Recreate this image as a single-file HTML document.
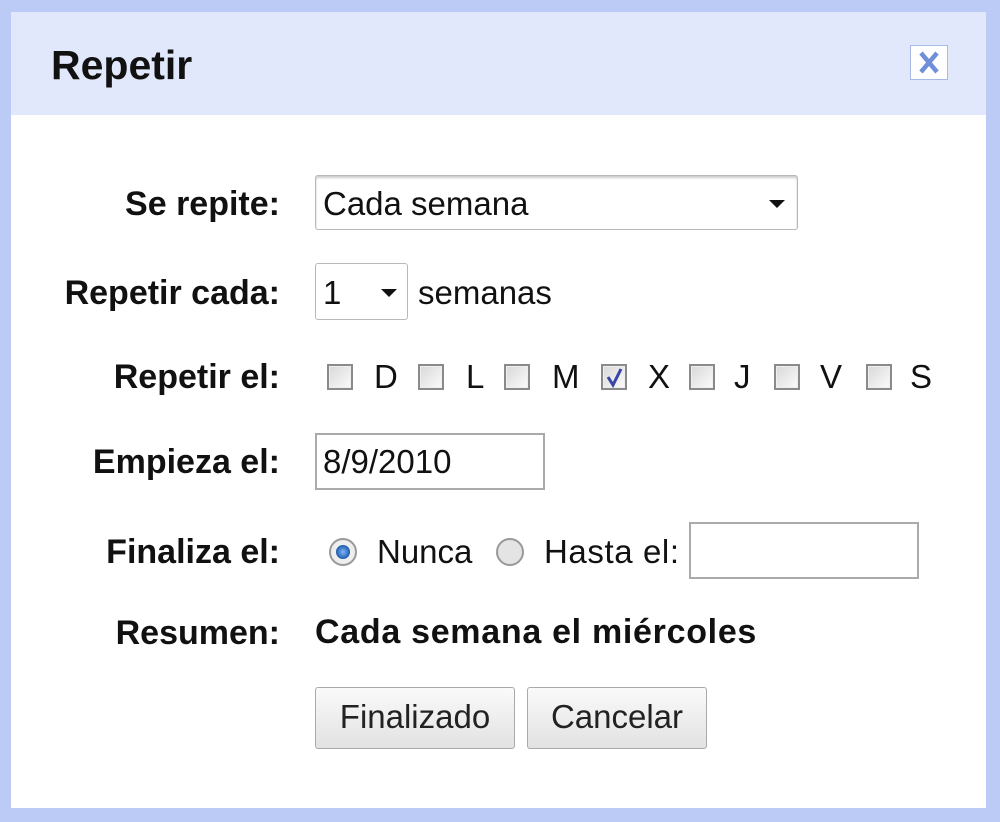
<!DOCTYPE html>
<html><head><meta charset="utf-8"><style>
*{margin:0;padding:0;box-sizing:border-box}
body{width:1000px;height:822px;background:#bccbf5;position:relative;overflow:hidden;font-family:"Liberation Sans",Arial,sans-serif;color:#111}
.dlg{position:absolute;left:11px;top:12px;width:975px;height:796px;background:#fff}
.hdr{position:absolute;left:11px;top:12px;width:975px;height:103px;background:#e1e8fc}
.t{position:absolute;white-space:nowrap;line-height:1}
.lb{font-weight:bold;font-size:34px;right:720px;text-align:right}
.rg{font-size:33px}
.box{position:absolute;background:#fff;border:1px solid #b8b8b8}
.cb{position:absolute;width:26px;height:26px;border:2px solid #8a8a8a;background:linear-gradient(135deg,#d8d8d8,#fbfbfb);box-shadow:inset 0 0 0 1px #eee}
.btn{position:absolute;border:1px solid #aaa;border-radius:3px;background:linear-gradient(#fafafa,#e2e2e2);font-size:33px;text-align:center;line-height:58px;color:#222}
.arr{position:absolute;width:0;height:0;border-left:8px solid transparent;border-right:8px solid transparent;border-top:8px solid #111}
</style></head><body>
<div class="dlg"></div>
<div class="hdr"></div>
<div class="t" style="left:51px;top:45px;font-size:41px;font-weight:bold">Repetir</div>
<div style="position:absolute;left:910px;top:45px;width:38px;height:35px;border:1px solid #a9b9e6;background:#fff"></div>
<svg style="position:absolute;left:910px;top:45px" width="38" height="35"><path d="M11 8 L27 27 M27 8 L11 27" stroke="#6f8fd8" stroke-width="4.5"/></svg>

<div class="t lb" style="top:187px">Se repite:</div>
<div class="box" style="left:315px;top:175px;width:483px;height:55px;border-radius:3px;box-shadow:inset 0 2px 2px #ccc"></div>
<div class="t rg" style="left:323px;top:187px">Cada semana</div>
<div class="arr" style="left:769px;top:200px"></div>

<div class="t lb" style="top:276px">Repetir cada:</div>
<div class="box" style="left:315px;top:263px;width:93px;height:57px;border-radius:3px"></div>
<div class="t rg" style="left:323px;top:276px">1</div>
<div class="arr" style="left:381px;top:289px"></div>
<div class="t rg" style="left:418px;top:276px">semanas</div>

<div class="t lb" style="top:360px">Repetir el:</div>
<div class="cb" style="left:327px;top:364px"></div><div class="t rg" style="left:374px;top:360px">D</div>
<div class="cb" style="left:418px;top:364px"></div><div class="t rg" style="left:466px;top:360px">L</div>
<div class="cb" style="left:504px;top:364px"></div><div class="t rg" style="left:552px;top:360px">M</div>
<div class="cb" style="left:601px;top:364px"></div><div class="t rg" style="left:648px;top:360px">X</div>
<svg style="position:absolute;left:601px;top:364px" width="26" height="26"><path d="M7 13 L12 21 L20 5" stroke="#3b45a8" stroke-width="3" fill="none"/></svg>
<div class="cb" style="left:689px;top:364px"></div><div class="t rg" style="left:734px;top:360px">J</div>
<div class="cb" style="left:774px;top:364px"></div><div class="t rg" style="left:820px;top:360px">V</div>
<div class="cb" style="left:866px;top:364px"></div><div class="t rg" style="left:910px;top:360px">S</div>

<div class="t lb" style="top:445px">Empieza el:</div>
<div class="box" style="left:315px;top:433px;width:230px;height:57px;border:2px solid #aaa"></div>
<div class="t rg" style="left:323px;top:445px">8/9/2010</div>

<div class="t lb" style="top:535px">Finaliza el:</div>
<svg style="position:absolute;left:328px;top:537px" width="32" height="32"><defs><radialGradient id="g"><stop offset="0" stop-color="#7fb6ff"/><stop offset="1" stop-color="#1d5aa8"/></radialGradient></defs><circle cx="15" cy="15" r="13" fill="#eee" stroke="#999" stroke-width="2"/><circle cx="15" cy="15" r="7" fill="url(#g)"/></svg>
<div class="t rg" style="left:377px;top:535px">Nunca</div>
<svg style="position:absolute;left:495px;top:537px" width="32" height="32"><circle cx="15" cy="15" r="13" fill="#e4e4e4" stroke="#999" stroke-width="2"/></svg>
<div class="t rg" style="left:544px;top:535px;letter-spacing:0.6px">Hasta el:</div>
<div class="box" style="left:689px;top:522px;width:230px;height:57px;border:2px solid #aaa"></div>

<div class="t lb" style="top:616px">Resumen:</div>
<div class="t" style="left:315px;top:615px;font-size:34px;font-weight:bold;letter-spacing:0.7px">Cada semana el miércoles</div>

<div class="btn" style="left:315px;top:687px;width:200px;height:62px">Finalizado</div>
<div class="btn" style="left:527px;top:687px;width:180px;height:62px">Cancelar</div>
</body></html>
